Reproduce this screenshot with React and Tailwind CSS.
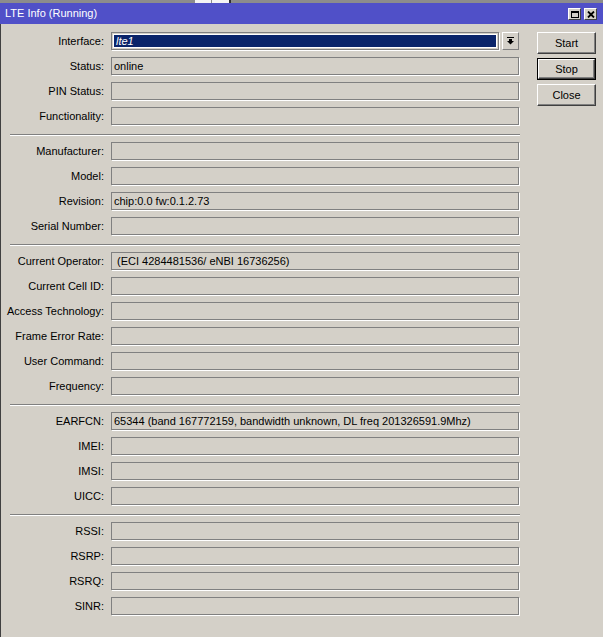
import React from 'react';

const sections = [
    [['Status', 'online'], ['PIN Status', ''], ['Functionality', '']],
    [['Manufacturer', ''], ['Model', ''], ['Revision', 'chip:0.0 fw:0.1.2.73'], ['Serial Number', '']],
    [
        ['Current Operator', ' (ECI 4284481536/ eNBI 16736256)'],
        ['Current Cell ID', ''],
        ['Access Technology', ''],
        ['Frame Error Rate', ''],
        ['User Command', ''],
        ['Frequency', ''],
    ],
    [
        ['EARFCN', '65344 (band 167772159, bandwidth unknown, DL freq 201326591.9Mhz)'],
        ['IMEI', ''],
        ['IMSI', ''],
        ['UICC', ''],
    ],
    [['RSSI', ''], ['RSRP', ''], ['RSRQ', ''], ['SINR', '']],
];

const Label = ({ children }) => (
    <div className="w-[103px] shrink-0 text-right whitespace-nowrap leading-none">{children}:</div>
);

const Field = ({ label, value }) => (
    <div className="flex items-center gap-[7px] h-[18px]">
        <Label>{label}</Label>
        <div className="w-[408px] h-[18px] border border-[#808080] shadow-[1px_1px_0_#ffffff] pl-[2px] flex items-center whitespace-pre leading-none overflow-hidden">
            {value}
        </div>
    </div>
);

const Separator = () => (
    <div className="ml-[9px] w-[510px] h-[2px] mt-[9px] mb-[6px] border-t border-[#808080] border-b border-b-white" />
);

const WinButton = ({ children, isDefault }) => (
    <div className={`w-[59px] h-[22px] ${isDefault ? 'border border-black' : ''}`}>
        <div className="w-full h-full flex items-center justify-center bg-[#d4d0c8] border border-t-white border-l-white border-r-[#404040] border-b-[#404040] shadow-[inset_-1px_-1px_0_#808080] leading-none">
            {children}
        </div>
    </div>
);

const TitleIcon = ({ children }) => (
    <div className="w-[13px] h-[12px] flex items-center justify-center bg-[#d4d0c8] border border-t-white border-l-white border-r-[#404040] border-b-[#404040]">
        {children}
    </div>
);

export default function App() {
    return (
        <div className="w-[603px] h-[637px] bg-[#d4d0c8] flex flex-col overflow-hidden text-[11px] text-black font-['Liberation_Sans',Arial,sans-serif]">
            {/* strip of the window behind */}
            <div className="h-[3px] bg-[#8c8c8c] flex">
                <div className="w-[195px]" />
                <div className="w-[16px] bg-[#f4f4f4]" />
                <div className="w-[1px]" />
                <div className="w-[17px] bg-[#f4f4f4]" />
                <div className="w-[2px] bg-[#303030]" />
            </div>

            {/* title bar */}
            <div className="h-[21px] bg-[#5050c8] flex items-center pl-[5px] pr-[6px] text-white">
                <span className="leading-none">LTE Info (Running)</span>
                <div className="ml-auto flex gap-[3px] mt-[1px]">
                    <TitleIcon>
                        <svg width="8" height="7" viewBox="0 0 8 7">
                            <rect x="0.5" y="0.5" width="7" height="6" fill="none" stroke="#000" />
                            <rect x="0" y="0" width="8" height="2" fill="#000" />
                        </svg>
                    </TitleIcon>
                    <TitleIcon>
                        <svg width="8" height="7" viewBox="0 0 8 7">
                            <path d="M1 0.5 L7 6.5 M7 0.5 L1 6.5" stroke="#000" strokeWidth="1.8" />
                        </svg>
                    </TitleIcon>
                </div>
            </div>

            {/* body */}
            <div className="flex-1 flex border-l border-[#404040] pt-[8px]">
                <div className="flex flex-col">
                    <div className="flex flex-col gap-[7px]">
                        <div className="flex items-center gap-[7px] h-[18px]">
                            <Label>Interface</Label>
                            <div className="flex gap-[3px]">
                                <div className="w-[388px] h-[18px] border border-[#808080] shadow-[1px_1px_0_#ffffff] p-[1px]">
                                    <div className="w-full h-full border border-white bg-[#0a246a] text-white italic pl-[2px] flex items-center leading-none">
                                        lte1
                                    </div>
                                </div>
                                <div className="w-[17px] h-[18px] flex items-center justify-center bg-[#d4d0c8] border border-t-white border-l-white border-r-[#808080] border-b-[#808080]">
                                    <svg width="7" height="8" viewBox="0 0 7 8">
                                        <rect x="0" y="0" width="7" height="1" fill="#000" />
                                        <rect x="2" y="2" width="3" height="2" fill="#000" />
                                        <polygon points="0,4 7,4 3.5,7.5" fill="#000" />
                                    </svg>
                                </div>
                            </div>
                        </div>
                        {sections[0].map(([l, v]) => (
                            <Field key={l} label={l} value={v} />
                        ))}
                    </div>
                    {sections.slice(1).map((rows, i) => (
                        <React.Fragment key={i}>
                            <Separator />
                            <div className="flex flex-col gap-[7px]">
                                {rows.map(([l, v]) => (
                                    <Field key={l} label={l} value={v} />
                                ))}
                            </div>
                        </React.Fragment>
                    ))}
                </div>

                <div className="ml-[17px] flex flex-col gap-[4px]">
                    <WinButton>Start</WinButton>
                    <WinButton isDefault>Stop</WinButton>
                    <WinButton>Close</WinButton>
                </div>
            </div>
        </div>
    );
}
